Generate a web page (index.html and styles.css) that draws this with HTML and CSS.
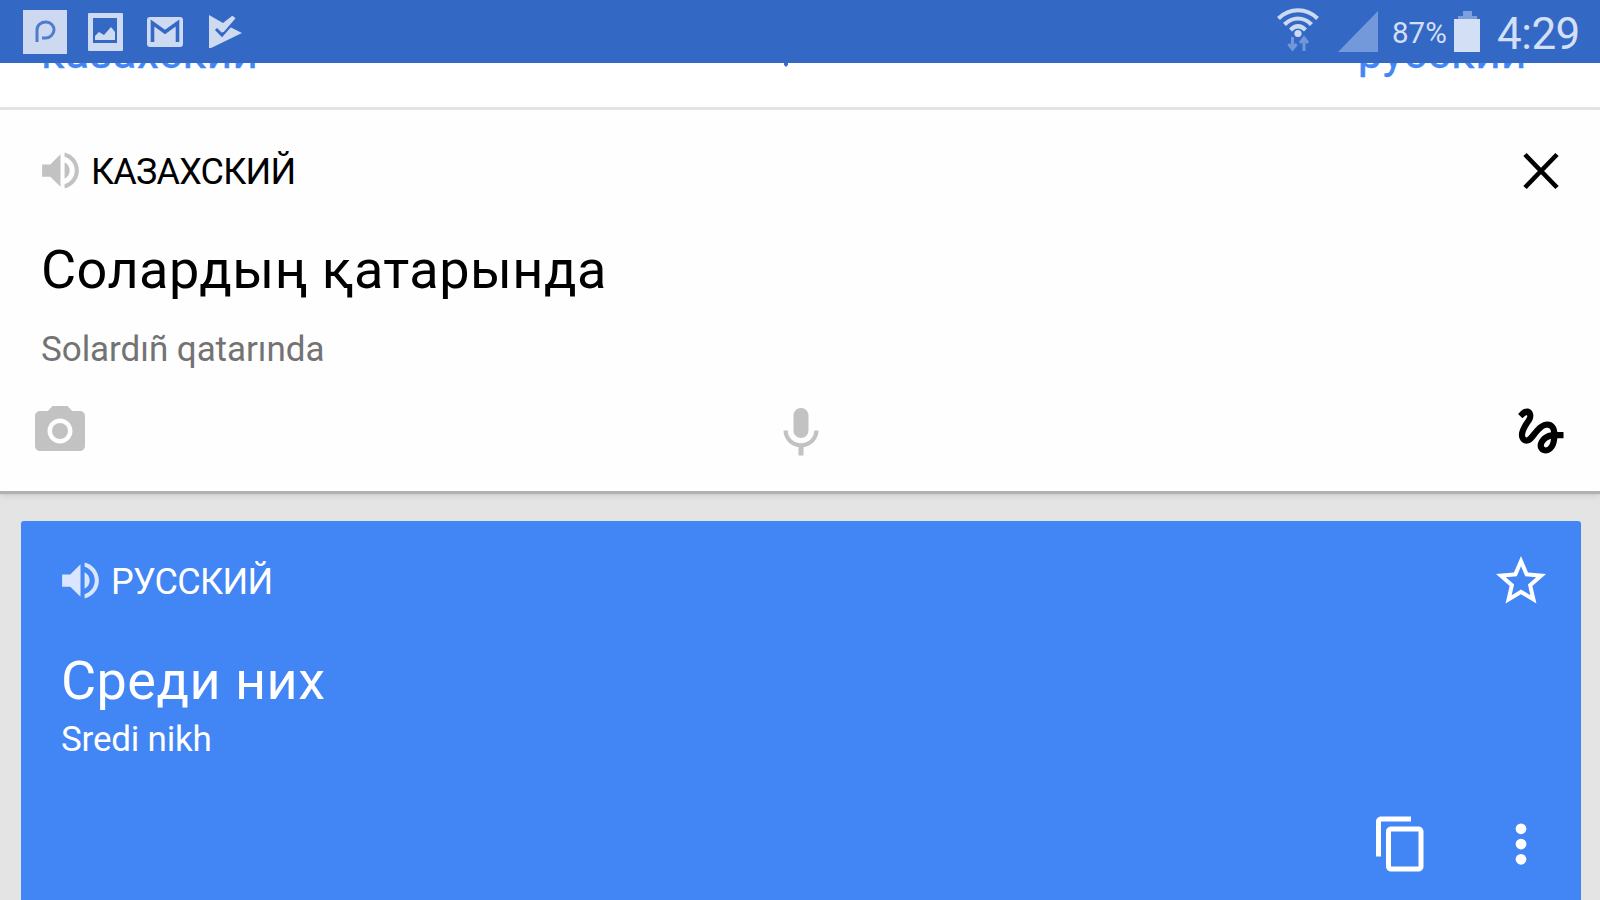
FILE: index.html
```html
<!DOCTYPE html>
<html lang="ru">
<head>
<meta charset="utf-8">
<title>Переводчик</title>
<link rel="stylesheet" href="styles.css">
</head>
<body>
<div class="screen">
  <header class="status">
    <div class="notifications">
      <svg width="44" height="44" viewBox="0 0 44 44"><path fill="#cdd9f1" d="M0 0h44v44H0z"/><path d="M14 32V20c0-5 4-8 9-8s8 4 8 8-4 8-8 8h-4" fill="none" stroke="#4f7dcc" stroke-width="3"/></svg>
      <svg width="35" height="38" viewBox="0 0 35 38"><path fill="#cddaf2" fill-rule="evenodd" d="M1 0h33q1 0 1 1v36q0 1-1 1H1q-1 0-1-1V1q0-1 1-1zM5 5v25h24V5z"/><path fill="#cddaf2" d="M7 27v-4l4-4 5 3 7-8 4 5v8z"/></svg>
      <svg width="36" height="30" viewBox="0 0 36 30"><rect width="36" height="30" rx="3" fill="#cddaf2"/><path d="M5.500 25V6L18 15 30.500 6v19" fill="none" stroke="#3369c5" stroke-width="3.600"/></svg>
      <svg width="33" height="34" viewBox="0 0 33 34"><path fill="#cddaf2" d="M0 0l14 8 9-7 3 3-5 8 12 6L2 33H0z"/><path d="M7 14l6 6L28 3" fill="none" stroke="#3369c5" stroke-width="3"/><path d="M13 16L25 2" stroke="#cddaf2" stroke-width="4"/></svg>
    </div>
    <div class="system">
      <svg class="wifi" width="42" height="46" viewBox="0 0 42 46"><g fill="none" stroke="#cddaf2" stroke-width="4.200"><path d="M1.500 10.500c11-11 28-11 39 0"/><path d="M7.500 16.500c8-8 19-8 27 0"/><path d="M13.500 22c5-5 10-5 15 0"/></g><circle cx="21" cy="25.500" r="3.600" fill="#cddaf2"/><path d="M15.500 29v12m-4-5l4 5 4-5M27 43V31m-4 4l4-5 4 5" fill="none" stroke="#7398da" stroke-width="3"/></svg>
      <svg class="signal" width="40" height="41" viewBox="0 0 40 41"><path fill="#7499da" d="M40 0v41H0z"/></svg>
      <span class="percent">87%</span>
      <svg class="battery" width="26" height="41" viewBox="0 0 26 41"><path fill="#7da0dd" d="M9 0h9v5h5v3H4V5h5z"/><path fill="#d3dff5" d="M0 8h26v33H0z"/></svg>
      <span class="clock">4:29</span>
    </div>
  </header>

  <nav class="languages">
    <span class="lang-from">казахский</span>
    <svg class="swap" width="6" height="8" viewBox="0 0 6 8"><path fill="#3a6fd0" d="M1 0h4v2L3 4 1 2z"/></svg>
    <span class="lang-to">русский</span>
  </nav>

  <section class="source">
    <div class="heading">
      <svg class="speaker grey" viewBox="0 0 24 24"><path d="M3 9v6h4l5 5V4L7 9H3z"/><path d="M16.500 12c0-1.770-1.020-3.290-2.500-4.030v8.050c1.480-.730 2.500-2.250 2.500-4.020zM14 3.230v2.060c2.890.860 5 3.540 5 6.710s-2.110 5.850-5 6.710v2.060c4.010-.910 7-4.490 7-8.770s-2.990-7.860-7-8.770z"/></svg>
      <span class="label label-from">КАЗАХСКИЙ</span>
      <svg class="icon close" viewBox="0 0 24 24"><path d="M5.600 5.400l12.800 13.200M18.400 5.400L5.600 18.600" fill="none" stroke="#000" stroke-width="1.850"/></svg>
    </div>
    <div class="phrase phrase-from">Солардың қатарында</div>
    <div class="translit translit-from">Solardıñ qatarında</div>
    <div class="tools">
      <svg class="icon grey" viewBox="0 0 24 24"><circle cx="12" cy="12" r="3.200"/><path d="M9 2L7.170 4H4c-1.100 0-2 .9-2 2v12c0 1.100.9 2 2 2h16c1.100 0 2-.9 2-2V6c0-1.100-.9-2-2-2h-3.170L15 2H9zm3 15c-2.760 0-5-2.240-5-5s2.240-5 5-5 5 2.240 5 5-2.240 5-5 5z"/></svg>
      <svg class="icon mic grey" viewBox="0 0 24 24"><path d="M12 14c1.660 0 2.990-1.340 2.990-3L15 5c0-1.660-1.340-3-3-3S9 3.340 9 5v6c0 1.660 1.340 3 3 3zm5.300-3c0 3-2.540 5.100-5.300 5.100S6.700 14 6.700 11H5c0 3.410 2.720 6.230 6 6.720V21h2v-3.280c3.280-.480 6-3.300 6-6.720h-1.700z"/></svg>
      <svg class="icon" viewBox="0 0 24 24"><path d="M4.590 6.890c.7-.71 1.400-1.350 1.710-1.220.5.2 0 1.030-.3 1.520-.25.42-2.860 3.890-2.860 6.310 0 1.280.48 2.340 1.340 2.980.75.56 1.740.73 2.640.46 1.070-.31 1.950-1.400 3.060-2.770 1.210-1.490 2.830-3.440 4.080-3.440 1.630 0 1.650 1.010 1.760 1.790-3.780.64-5.380 3.670-5.380 5.370 0 1.700 1.440 3.090 3.210 3.090 1.630 0 4.290-1.330 4.690-6.100H21v-2.500h-2.470c-.15-1.650-1.090-4.200-4.030-4.200-2.250 0-4.180 1.910-4.940 2.840-.58.73-2.060 2.480-2.290 2.720-.25.3-.68.84-1.110.84-.45 0-.72-.83-.36-1.920.35-1.090 1.400-2.860 1.850-3.520.78-1.140 1.300-1.920 1.300-3.280C8.950 3.690 7.310 3 6.440 3 5.120 3 3.970 4 3.720 4.250c-.36.36-.66.66-.88.93l1.750 1.710zm9.290 11.660c-.31 0-.74-.26-.74-.72 0-.6.73-2.200 2.870-2.760-.3 2.690-1.430 3.480-2.130 3.480z"/></svg>
    </div>
  </section>

  <section class="result">
    <div class="heading">
      <svg class="speaker" viewBox="0 0 24 24"><path fill="#d9e6fd" d="M3 9v6h4l5 5V4L7 9H3z"/><path fill="#d9e6fd" d="M16.500 12c0-1.770-1.020-3.290-2.500-4.030v8.050c1.480-.730 2.500-2.250 2.500-4.020zM14 3.230v2.060c2.890.860 5 3.540 5 6.710s-2.110 5.850-5 6.710v2.060c4.010-.910 7-4.490 7-8.770s-2.990-7.860-7-8.770z"/></svg>
      <span class="label label-to">РУССКИЙ</span>
      <svg class="icon star" viewBox="0 0 24 24"><path d="M22 9.240l-7.190-.62L12 2 9.190 8.630 2 9.240l5.460 4.730L5.820 21 12 17.270 18.180 21l-1.630-7.030L22 9.240zM12 15.400l-3.760 2.270 1-4.280-3.320-2.880 4.380-.38L12 6.100l1.710 4.040 4.380.38-3.320 2.880 1 4.280L12 15.400z"/></svg>
    </div>
    <div class="phrase phrase-to">Среди них</div>
    <div class="translit translit-to">Sredi nikh</div>
    <div class="actions">
      <svg class="icon" viewBox="0 0 24 24"><path d="M16 1H4c-1.100 0-2 .9-2 2v14h2V3h12V1zm3 4H8c-1.100 0-2 .9-2 2v14c0 1.100.9 2 2 2h11c1.100 0 2-.9 2-2V7c0-1.100-.9-2-2-2zm0 16H8V7h11v14z"/></svg>
      <svg class="icon" viewBox="0 0 24 24"><circle cx="12" cy="5.900" r="2.150"/><circle cx="12" cy="12" r="2.150"/><circle cx="12" cy="18.100" r="2.150"/></svg>
    </div>
  </section>
</div>
</body>
</html>
```
FILE: styles.css
```css
* { box-sizing: border-box; }
body { margin: 0; font-family: Roboto, "Noto Sans", sans-serif; }
svg { display: block; flex: none; }
span, .phrase, .translit { white-space: nowrap; }

.screen {
  display: flex;
  flex-direction: column;
  width: 1600px;
  height: 900px;
  overflow: hidden;
  background: #e4e4e4;
}

.status {
  display: flex;
  justify-content: space-between;
  flex: none;
  height: 63px;
  padding: 0 20px 1px 23px;
  background: #3369c5;
}
.notifications, .system { display: flex; align-items: center; }
.notifications { gap: 21px; padding-top: 1px; }
.notifications svg:nth-child(3) { margin-left: 3px; }
.notifications svg:nth-child(4) { margin-left: 5px; }
.system { color: #d3dff5; }
.signal { margin-left: 19px; }
.percent { margin-left: 14px; width: 56px; font-size: 29.500px; line-height: 56px; padding-top: 4px; }
.battery { margin-left: 6px; }
.clock { margin-left: 17px; width: 83px; font-size: 44px; line-height: 56px; padding-top: 5px; letter-spacing: -.5px; }

/* The language bar is scrolled partly out of view, so its top is clipped. */
.languages {
  display: flex;
  align-items: flex-start;
  justify-content: space-between;
  flex: none;
  height: 47px;
  overflow: hidden;
  padding: 0 73px 0 41px;
  background: #fff;
  border-bottom: 3px solid #e3e3e3;
  color: #4285f4;
  font-size: 44px;
  letter-spacing: .5px;
  line-height: 106px;
}
.lang-from, .lang-to { margin-top: -63px; -webkit-text-stroke: .4px #4285f4; }
.swap { margin-left: -44px; }

.source {
  position: relative;
  z-index: 1;
  display: flex;
  flex-direction: column;
  flex: none;
  height: 381px;
  padding: 30px 29px 0;
  background: #fefefe;
  box-shadow: 0 3px 1px #b2b2b2, 0 5px 6px #cfcfcf;
}
.heading { display: flex; align-items: center; height: 61px; }
.speaker { width: 51px; height: 49px; }
.icon { width: 60px; height: 60px; fill: #000; }
.grey { fill: #c2c2c2; }
.label { font-size: 36px; line-height: 58px; padding-top: 3px; letter-spacing: -.8px; }
.source .speaker { margin-left: 6px; }
.label-from { margin-left: 5px; }
.heading .icon { margin-left: auto; }
.phrase { font-size: 54px; line-height: 70px; letter-spacing: .45px; }
.phrase-from { margin: 34px 0 0 12px; }
.translit { font-size: 35px; line-height: 50px; letter-spacing: -.05px; }
.translit-from { margin: 20px 0 0 12px; color: #737373; }
.tools { display: flex; justify-content: space-between; margin: 26px 0 0 1px; }
.tools .mic { margin: 2px 0 0; }

.result {
  display: flex;
  flex-direction: column;
  flex: 1;
  margin: 30px 19px 0 21px;
  padding: 29px 30px 0 34px;
  border-radius: 3px 3px 0 0;
  background: #4285f4;
  color: #fff;
}
.result .icon { fill: #fff; }
.label-to { margin-left: 5px; letter-spacing: -.7px; }
.phrase-to { margin: 35px 0 0 6px; }
.translit-to { margin: -1px 0 0 6px; letter-spacing: -.2px; }
.actions { display: flex; justify-content: flex-end; gap: 60px; margin-top: 49px; }
```
